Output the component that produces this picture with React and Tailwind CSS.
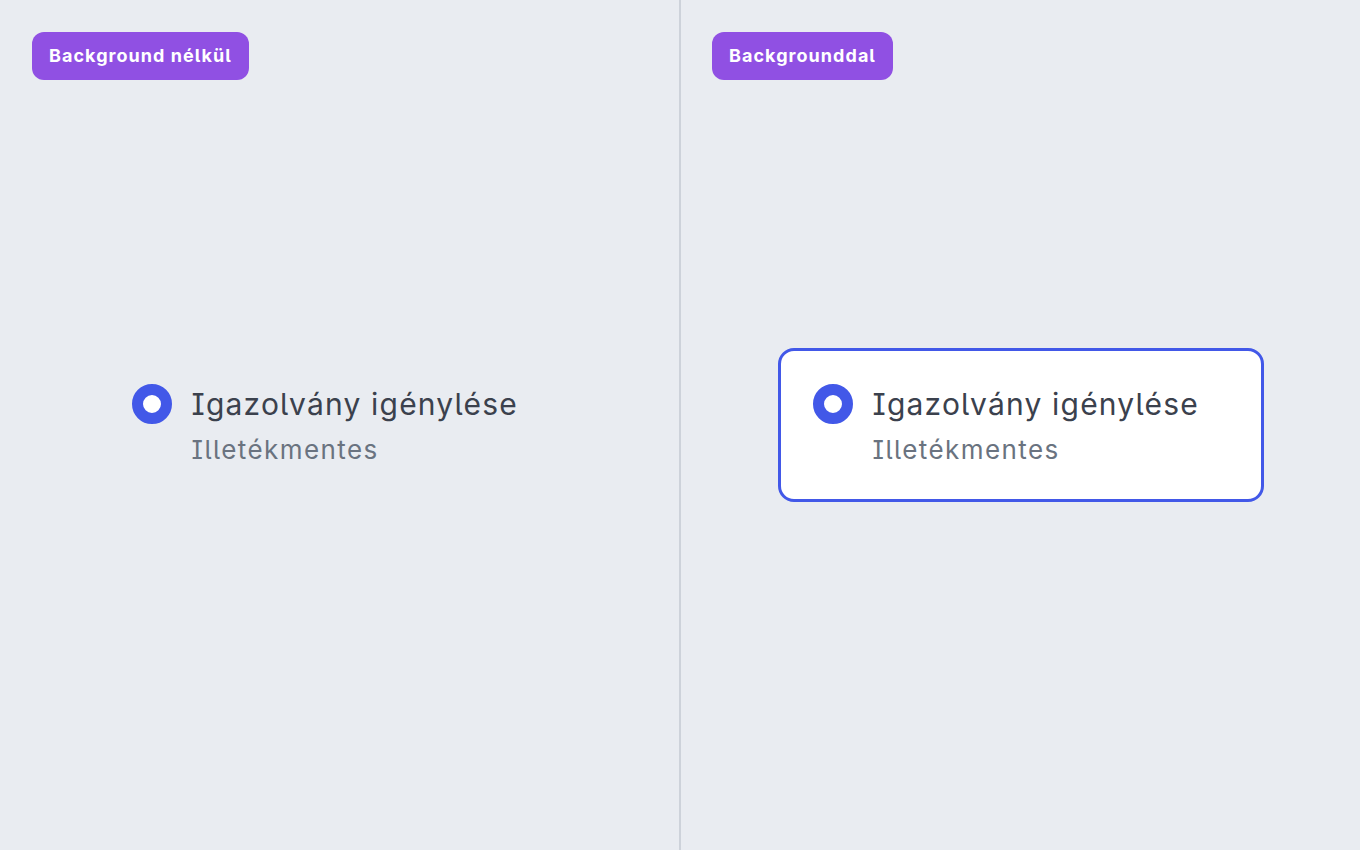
import React from 'react';

function RadioItem({ boxed }) {
    return (
        <div
            className={`w-[486px] flex items-start gap-5 px-8 py-[33px] rounded-2xl border-[3px] ${
                boxed ? 'bg-white border-[#4258e8]' : 'border-transparent'
            }`}
        >
            <div className="w-10 h-10 shrink-0 rounded-full border-[11px] border-[#4258e8] bg-white" />
            <div className="flex flex-col gap-2.5">
                <span className="text-[30px] leading-10 tracking-[0.04em] text-[#3b414d]">Igazolvány igénylése</span>
                <span className="text-[26px] leading-8 tracking-[0.055em] text-[#6a7380]">Illetékmentes</span>
            </div>
        </div>
    );
}

function Panel({ label, boxed, className = '' }) {
    return (
        <div className={`flex flex-col py-8 ${className}`}>
            <div className="flex">
                <span className="px-[17px] py-2.5 rounded-xl bg-[#9050e3] text-white text-lg leading-7 font-bold tracking-[0.058em]">
                    {label}
                </span>
            </div>
            <div className="flex-1 flex items-center justify-center pb-12">
                <RadioItem boxed={boxed} />
            </div>
        </div>
    );
}

export default function App() {
    return (
        <div className="w-[1360px] h-[850px] flex bg-[#e9ecf1] font-['Inter',sans-serif] [font-optical-sizing:none] [font-feature-settings:'ss02','cv05','cv08']">
            <Panel label="Background nélkül" className="w-[679px] shrink-0 px-8" />
            <div className="w-0.5 shrink-0 bg-[#cdd2da]" />
            <Panel label="Backgrounddal" boxed className="flex-1 px-[31px]" />
        </div>
    );
}
